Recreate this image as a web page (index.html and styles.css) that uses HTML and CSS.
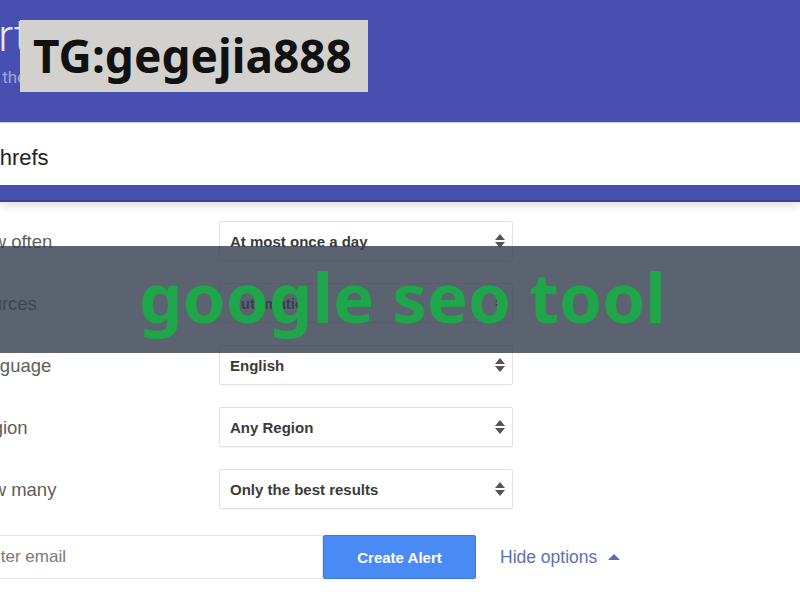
FILE: index.html
```html
<!DOCTYPE html>
<html lang="en">
<head>
  <meta charset="UTF-8">
  <meta name="viewport" content="width=device-width, initial-scale=1.0">
  <title>Alerts</title>
  <link rel="stylesheet" href="styles.css">
</head>
<body>
  <!-- 상단 헤더: 제목 + 검색창 -->
  <header class="top">
    <h1 class="top-title">Alerts</h1>
    <p class="top-sub">Monitor the web for interesting new content</p>
    <div class="search">
      <input class="search-input" type="text" value="Ahrefs">
    </div>
  </header>

  <!-- 옵션 -->
  <main class="options">
    <div class="row">
      <label class="row-label" for="often">How often</label>
      <div class="pick" id="often"><span>At most once a day</span><i class="updown"></i></div>
    </div>
    <div class="row">
      <label class="row-label" for="sources">Sources</label>
      <div class="pick" id="sources"><span>Automatic</span><i class="updown"></i></div>
    </div>
    <div class="row">
      <label class="row-label" for="language">Language</label>
      <div class="pick" id="language"><span>English</span><i class="updown"></i></div>
    </div>
    <div class="row">
      <label class="row-label" for="region">Region</label>
      <div class="pick" id="region"><span>Any Region</span><i class="updown"></i></div>
    </div>
    <div class="row">
      <label class="row-label" for="many">How many</label>
      <div class="pick" id="many"><span>Only the best results</span><i class="updown"></i></div>
    </div>

    <div class="send">
      <input class="email" type="text" placeholder="Enter email">
      <button class="create">Create Alert</button>
      <a class="hide" href="#">Hide options <span class="caret"></span></a>
    </div>
  </main>

  <!-- 워터마크 -->
  <div class="tag">TG:gegejia888</div>
  <div class="banner">google seo tool</div>
</body>
</html>
```

FILE: styles.css
```css
body { margin: 0; width: 800px; height: 600px; overflow: hidden; background: #fff; font-family: "Liberation Sans", Arial, sans-serif; position: relative; }

.top { background: #4750b0; padding: 0 0 15px; box-shadow: 0 2px 0 #3b4190, 0 4px 10px rgba(0,0,0,0.18); }
.top-title { margin: 0 0 0 -62px; padding-top: 14px; height: 46px; font-family: Roboto, sans-serif; font-weight: 300; font-size: 44px; line-height: 44px; color: #e6e8f6; }
.top-sub { margin: 0 0 0 -61px; height: 62px; font-family: Roboto, sans-serif; font-size: 17px; line-height: 22px; color: #9ea4dc; padding-top: 6px; box-sizing: border-box; }
.search { background: #fff; height: 63px; border-top: 1px solid #c5c9ea; box-sizing: border-box; display: flex; align-items: center; padding-top: 7px; }
.search-input { border: none; outline: none; margin-left: -15px; font-family: "Liberation Sans", Arial, sans-serif; font-size: 22px; color: #222; width: 400px; padding: 0; background: transparent; }

.options { padding-top: 21px; display: flex; flex-direction: column; gap: 22px; }
.row { display: flex; align-items: center; height: 40px; }
.row-label { flex: 0 0 250px; margin-left: -31px; padding-top: 1px; font-size: 18.5px; color: #5e5e5e; }
.pick { width: 294px; height: 40px; box-sizing: border-box; border: 1px solid #e2e2e2; border-radius: 2px; box-shadow: 0 1px 1px rgba(0,0,0,0.04); display: flex; align-items: center; justify-content: space-between; padding: 0 6px 0 10px; font-size: 15px; font-weight: bold; color: #3a3a3a; }
.updown { width: 12px; height: 16px; position: relative; }
.updown::before, .updown::after { content: ""; position: absolute; left: 1px; border-left: 5px solid transparent; border-right: 5px solid transparent; }
.updown::before { top: 1px; border-bottom: 6px solid #555; }
.updown::after { bottom: 1px; border-top: 6px solid #555; }

.send { display: flex; align-items: center; margin-top: 4px; }
.email { margin-left: -33px; width: 356px; height: 44px; box-sizing: border-box; border: 1px solid #e4e4e4; padding: 0 12px; font-family: "Liberation Sans", Arial, sans-serif; font-size: 17px; outline: none; }
.email::placeholder { color: #7a7a7a; }
.create { width: 153px; height: 44px; background: #4a8af4; border: 1px solid #3b78e7; border-radius: 2px; color: #fff; font-family: "Liberation Sans", Arial, sans-serif; font-size: 15px; font-weight: bold; cursor: pointer; }
.hide { margin-left: 24px; font-size: 17.5px; color: #5a72b4; text-decoration: none; display: flex; align-items: center; }
.caret { margin-left: 11px; border-left: 6px solid transparent; border-right: 6px solid transparent; border-bottom: 6px solid #5a72b4; }

.tag { position: absolute; left: 20px; top: 20px; width: 348px; height: 72px; background: #d3d1cd; font-family: "Noto Sans", sans-serif; font-weight: bold; font-size: 46px; line-height: 70px; color: #111; padding-left: 13px; box-sizing: border-box; }
.banner { position: absolute; left: 0; top: 246px; width: 800px; height: 107px; background: rgba(55,65,80,0.82); font-family: "Noto Sans", sans-serif; font-weight: bold; font-size: 69px; line-height: 100px; color: #1fa64a; padding-left: 139px; box-sizing: border-box; }
```
